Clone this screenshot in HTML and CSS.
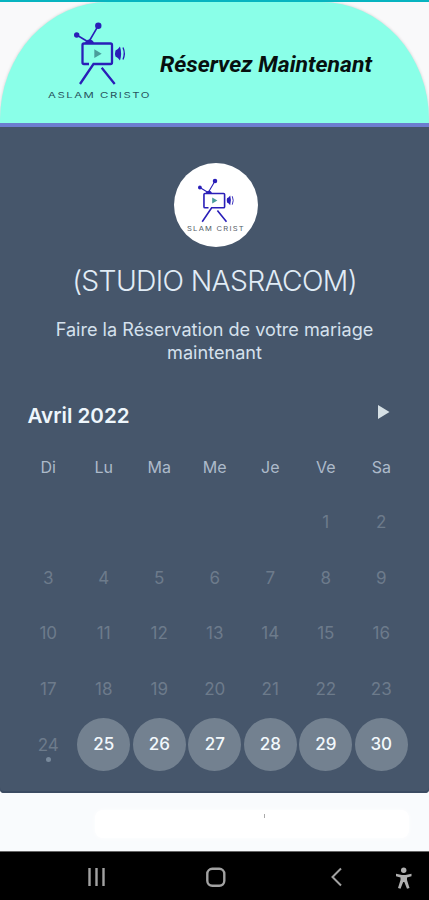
FILE: index.html
```html
<!DOCTYPE html>
<html lang="fr">
<head>
<meta charset="utf-8">
<title>Réservez Maintenant</title>
<link rel="stylesheet" href="styles.css">
</head>
<body>
<svg width="0" height="0" class="defs" aria-hidden="true">
  <symbol id="camera" viewBox="44 20 110 80">
    <g fill="none" stroke="#2a1fb8" stroke-width="2.3">
      <path d="M98.3 25.7 89.3 41M76.7 35l10 6" stroke-width="1.6"/>
      <path d="M89 64H84q-1.5 0-1.5-1.5V45q0-1.5 1.5-1.5H110.500q1.500 0 1.500 1.500V62.500q0 1.500-1.500 1.500H93.500L80 84M101.700 67.700 114.700 84"/>
      <path d="M123 47.500q2.600 6 0 12" stroke-width="1.300"/>
    </g>
    <g fill="#2a1fb8">
      <circle cx="98.300" cy="25.700" r="3.200"/>
      <circle cx="76.700" cy="35" r="2.700"/>
      <path d="M85 43q1-3.500 4.500-3.500T94 43zM115.500 50.500q2.500-1 4.500-4 2.200 7 0 14-2-3-4.500-4-1-3 0-6z"/>
    </g>
    <path d="M94.300 49.300 101.700 53.700 94.300 58z" fill="#4b9d9b"/>
  </symbol>
</svg>
<header class="banner">
  <div class="brand">
    <svg class="brand-icon"><use href="#camera"/></svg>
    <svg class="brand-name"><text x="4" y="7.500" textLength="103" lengthAdjust="spacingAndGlyphs">ASLAM CRISTO</text></svg>
  </div>
  <h1><svg width="216" height="32"><text x="0" y="23" textLength="212" lengthAdjust="spacingAndGlyphs">Réservez Maintenant</text></svg></h1>
</header>
<main class="booking">
  <div class="avatar">
    <svg class="avatar-icon"><use href="#camera"/></svg>
    <svg class="avatar-name"><text x="1" y="5.500" textLength="58" lengthAdjust="spacingAndGlyphs">SLAM CRIST</text></svg>
  </div>
  <h2>(STUDIO NASRACOM)</h2>
  <p class="intro">Faire la Réservation de votre mariage<br>maintenant</p>
  <div class="month">
    <h3>Avril 2022</h3>
    <svg class="next" viewBox="0 0 12 14"><path d="M0 0 11.500 7 0 14z"/></svg>
  </div>
  <div class="week names"><span>Di</span><span>Lu</span><span>Ma</span><span>Me</span><span>Je</span><span>Ve</span><span>Sa</span></div>
  <div class="week"><span></span><span></span><span></span><span></span><span></span><span>1</span><span>2</span></div>
  <div class="week"><span>3</span><span>4</span><span>5</span><span>6</span><span>7</span><span>8</span><span>9</span></div>
  <div class="week"><span>10</span><span>11</span><span>12</span><span>13</span><span>14</span><span>15</span><span>16</span></div>
  <div class="week"><span>17</span><span>18</span><span>19</span><span>20</span><span>21</span><span>22</span><span>23</span></div>
  <div class="week"><span class="today">24</span><span class="open">25</span><span class="open">26</span><span class="open">27</span><span class="open">28</span><span class="open">29</span><span class="open">30</span></div>
</main>
<div class="below"><div class="patch"></div><i class="speck"></i></div>
<nav class="system">
  <svg viewBox="0 0 429 50" fill="none" stroke="#a2a2a2" stroke-width="2.400">
    <path d="M89.500 16v18M96.500 16v18M103.500 16v18"/>
    <rect x="207.300" y="16.800" width="17" height="17" rx="5"/>
    <path d="M341 16.500 332.500 25 341 33.500" stroke-width="2"/>
    <g fill="#b0b0b0" stroke="none" transform="translate(0 -1)">
      <circle cx="403.700" cy="19.200" r="2.700"/>
      <path d="M396 22.700 402 24H405.500L411.500 22.700V25.300L407 26.500V29L409.500 37 407 37.700 404.300 31H403.200L400.500 37.700 398 37 400.500 29V26.500L396 25.300z"/>
    </g>
  </svg>
</nav>
</body>
</html>
```
FILE: styles.css
```css
* { box-sizing: border-box; }
body {
  margin: 0;
  width: 429px;
  height: 900px;
  overflow: hidden;
  display: flex;
  flex-direction: column;
  background: #f9f9fa;
  border-top: 2px solid #07b4c0;
  font-family: Inter, sans-serif;
}
.defs { position: absolute; }
h1, h2, h3, p { margin: 0; }
svg { display: block; }
.banner {
  height: 121px;
  flex: none;
  display: flex;
  background: #8affe8;
  border-radius: 108px 108px 0 0 / 118px 118px 0 0;
  box-shadow: 0 0 3px #ccc;
}
.brand { margin: 18px 0 0 44px; width: 110px; }
.brand-icon, .avatar-icon { overflow: visible; }
.brand-icon { width: 110px; height: 80px; margin-bottom: -10.500px; }
.brand-name { width: 110px; height: 10px; font-size: 7.500px; letter-spacing: 1px; fill: #28545e; }
.banner h1 { margin: 47px 0 0 6px; }
.banner h1 text { font: italic 700 22.500px Roboto, sans-serif; fill: #07100f; }
.booking {
  height: 670px;
  flex: none;
  border-top: 4px solid #6d7dd0;
  background: #46566b;
  border-radius: 0 0 4px 4px;
  box-shadow: inset 0 -2px #3b4b62;
  color: #e1ecf6;
  padding: 36px 20.500px 0;
}
.avatar {
  width: 84px;
  height: 84px;
  margin: 0 auto;
  position: relative;
  left: 1px;
  border-radius: 50%;
  background: #fff;
  padding: 13.700px 0 0 3px;
}
.avatar-icon { width: 77px; height: 56px; margin-bottom: -8px; }
.avatar-name { width: 62px; height: 8px; margin-left: 9px; font-size: 6px; letter-spacing: 1px; fill: #525b66; }
h2 {
  margin-top: 14px;
  font-size: 28.300px;
  line-height: 40px;
  font-weight: 300;
  letter-spacing: -.650px;
  text-align: center;
  white-space: nowrap;
}
.intro {
  margin-top: 17px;
  font-size: 18.100px;
  line-height: 23px;
  text-align: center;
  color: #d5e1ed;
  white-space: nowrap;
}
.month {
  height: 30px;
  margin-top: 36px;
  padding: 0 19px 0 7px;
  display: flex;
  justify-content: space-between;
}
.month h3 { font-size: 20.600px; line-height: 31px; font-weight: 600; color: #eef6fc; }
.next { width: 12px; height: 14px; margin-top: 5px; fill: #d6e0e5; }
.week {
  display: grid;
  grid-template-columns: repeat(7, 55.500px);
  height: 55.700px;
  align-items: center;
  justify-items: center;
  color: #6d7b8b;
  font-size: 17px;
}
.names { height: 54px; margin-top: 10px; color: #adbaca; font-size: 16px; }
.open {
  width: 53px;
  height: 53px;
  line-height: 53px;
  border-radius: 50%;
  background: #738190;
  text-align: center;
  color: #f2f8fc;
  font-weight: 500;
}
.today { position: relative; }
.today::after {
  content: "";
  position: absolute;
  left: calc(50% - 2.500px);
  bottom: -7px;
  width: 5px;
  height: 5px;
  border-radius: 50%;
  background: #78899b;
}
.below { height: 58px; flex: none; padding: 17px 20px 0 95px; position: relative; background: #f9fbfd; }
.patch { height: 28px; background: #fff; border-radius: 8px; box-shadow: 0 0 5px #fff; }
.speck { position: absolute; left: 264px; top: 21px; width: 1px; height: 4px; background: #aaa; }
.system { flex: 1; background: #000; border-top: 1px solid #666; }
.system svg { width: 429px; height: 50px; }
```
